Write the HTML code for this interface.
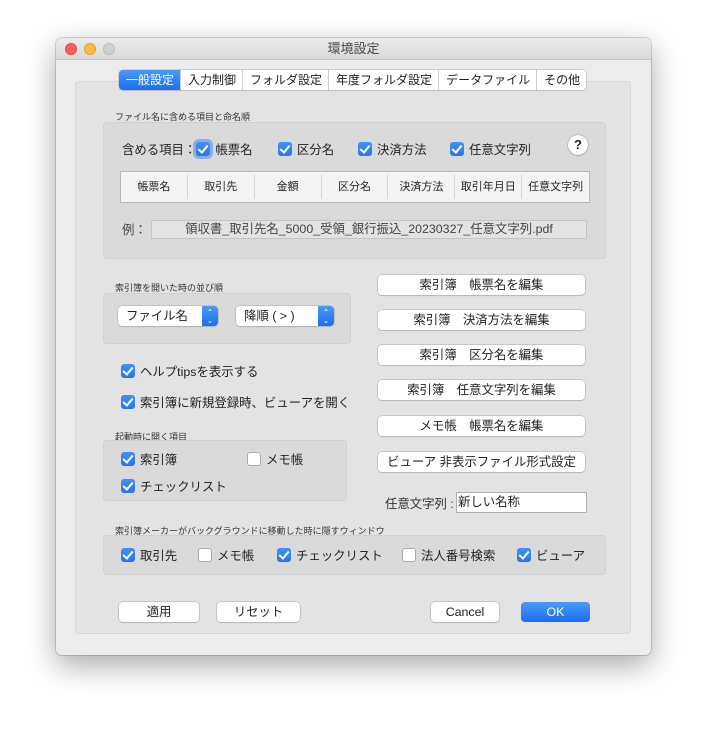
<!DOCTYPE html>
<html><head><meta charset="utf-8"><style>
*{box-sizing:border-box;margin:0;padding:0}
body{width:707px;height:729px;background:#fff;position:relative;overflow:hidden;font-family:"Liberation Sans","Noto Sans CJK JP",sans-serif;color:#222}
.win{position:absolute;left:56px;top:38px;width:595px;height:617px;background:#ececec;border-radius:6px;box-shadow:0 10px 30px rgba(0,0,0,.35),0 0 0 1px rgba(0,0,0,.15);overflow:hidden}
.tb{height:22px;background:linear-gradient(#ebebeb,#d9d9d9);border-bottom:1px solid #c4c4c4;text-align:center;font-size:13px;line-height:22px;color:#4a4a4a}
.dot{position:absolute;top:5px;width:12px;height:12px;border-radius:50%}
.a{position:absolute}
.pane{left:19px;top:43px;width:556px;height:553px;background:#e3e3e3;border:1px solid #d6d6d6;border-radius:4px}
.tabs{left:63px;top:32px;height:20px;display:flex;background:#fff;border-radius:4px;box-shadow:0 0 0 .5px #b0b0b0,0 1px 1px rgba(0,0,0,.15);font-size:12px;line-height:20px}
.tabs div{padding:0 6px 0 7px;border-right:1px solid #d0d0d0}
.tabs div:last-child{border:none}
.tabs .sel{background:linear-gradient(#4a9bf8,#1a6ef0);color:#fff;border-radius:4px 0 0 4px}
.box{background:#dadada;border:1px solid #d0d0d0;border-radius:4px}
.lbl{font-size:9px;color:#333}
.t{font-size:12.4px;white-space:nowrap}
.cb{display:inline-block;width:14px;height:14px;border-radius:3px;background:linear-gradient(#3f91f7,#2a74ee);vertical-align:-2px;position:relative;margin-right:5px}
.cb:after{content:"";position:absolute;left:4px;top:1px;width:4px;height:8px;border:solid #fff;border-width:0 2px 2px 0;transform:rotate(40deg)}
.cb.off{background:#fff;box-shadow:inset 0 0 0 1px #aaa}
.cb.off:after{display:none}
.btn{position:absolute;background:#fff;border-radius:4px;box-shadow:0 0 0 .5px #a8a8a8,0 1px 1px rgba(0,0,0,.15);font-size:12.4px;text-align:center;line-height:20px;height:20px}
.pop{position:absolute;height:20px;background:#fff;border-radius:4px;box-shadow:0 0 0 .5px #a8a8a8,0 1px 1px rgba(0,0,0,.15);font-size:12.4px;line-height:20px;padding-left:8px}
.pop i{position:absolute;right:0;top:0;width:16px;height:20px;background:linear-gradient(#4a9bf8,#1a6ef0);border-radius:0 4px 4px 0;color:#fff;font-style:normal;font-size:8px;line-height:8px;text-align:center;padding-top:3px}
.tbl{display:flex;background:#f4f4f4;border:1px solid #b8b8b8;font-size:11px;line-height:30px}
.tbl div{width:67px;text-align:center;border-right:1px solid #d4d4d4;height:24px;margin-top:3px;line-height:24px}
.tbl div:last-child{border:none}
</style></head><body>
<div class="win">
<div class="tb">環境設定</div>
<div class="dot" style="left:9px;background:#fc605c;border:.5px solid #de4a45"></div>
<div class="dot" style="left:28px;background:#fdbc40;border:.5px solid #dea033"></div>
<div class="dot" style="left:47px;background:#d0d0d0;border:.5px solid #bbb"></div>
<div class="a pane"></div>
<div class="a tabs"><div class="sel">一般設定</div><div>入力制御</div><div>フォルダ設定</div><div>年度フォルダ設定</div><div>データファイル</div><div>その他</div></div>

<div class="a lbl" style="left:59px;top:72px">ファイル名に含める項目と命名順</div>
<div class="a box" style="left:47px;top:84px;width:503px;height:137px"></div>
<div class="a t" style="left:66px;top:102px">含める項目：<span class="cb" style="box-shadow:0 0 0 3px rgba(60,130,240,.5)"></span>帳票名</div>
<div class="a t" style="left:222px;top:102px"><span class="cb"></span>区分名</div>
<div class="a t" style="left:302px;top:102px"><span class="cb"></span>決済方法</div>
<div class="a t" style="left:394px;top:102px"><span class="cb"></span>任意文字列</div>
<div class="a" style="left:512px;top:97px;width:20px;height:20px;border-radius:50%;background:#fff;box-shadow:0 0 0 .5px #999,0 1px 1px rgba(0,0,0,.2);text-align:center;font-size:13px;font-weight:bold;line-height:20px">?</div>
<div class="a tbl" style="left:64px;top:133px;width:470px;height:32px"><div>帳票名</div><div>取引先</div><div>金額</div><div>区分名</div><div>決済方法</div><div>取引年月日</div><div>任意文字列</div></div>
<div class="a t" style="left:66px;top:182px;color:#444">例：</div>
<div class="a" style="left:95px;top:182px;width:436px;height:19px;background:#e3e3e3;border:1px solid #c4c4c4;font-size:12.4px;text-align:center;line-height:17px;color:#444">領収書_取引先名_5000_受領_銀行振込_20230327_任意文字列.pdf</div>

<div class="a lbl" style="left:59px;top:243px">索引簿を開いた時の並び順</div>
<div class="a box" style="left:47px;top:255px;width:248px;height:51px"></div>
<div class="pop" style="left:62px;top:268px;width:100px">ファイル名<i>⌃<br>⌄</i></div>
<div class="pop" style="left:180px;top:268px;width:98px">降順 ( &gt; )<i>⌃<br>⌄</i></div>
<div class="a t" style="left:65px;top:324px"><span class="cb"></span>ヘルプtipsを表示する</div>
<div class="a t" style="left:65px;top:355px"><span class="cb"></span>索引簿に新規登録時、ビューアを開く</div>
<div class="a lbl" style="left:59px;top:392px">起動時に開く項目</div>
<div class="a box" style="left:47px;top:402px;width:244px;height:61px"></div>
<div class="a t" style="left:65px;top:412px"><span class="cb"></span>索引簿</div>
<div class="a t" style="left:191px;top:412px"><span class="cb off"></span>メモ帳</div>
<div class="a t" style="left:65px;top:439px"><span class="cb"></span>チェックリスト</div>

<div class="btn" style="left:322px;top:237px;width:207px">索引簿　帳票名を編集</div>
<div class="btn" style="left:322px;top:272px;width:207px">索引簿　決済方法を編集</div>
<div class="btn" style="left:322px;top:307px;width:207px">索引簿　区分名を編集</div>
<div class="btn" style="left:322px;top:342px;width:207px">索引簿　任意文字列を編集</div>
<div class="btn" style="left:322px;top:378px;width:207px">メモ帳　帳票名を編集</div>
<div class="btn" style="left:322px;top:414px;width:207px">ビューア 非表示ファイル形式設定</div>
<div class="a t" style="left:329px;top:456px;color:#333">任意文字列 :</div>
<div class="a" style="left:400px;top:454px;width:131px;height:21px;background:#fff;border:1px solid #b0b0b0;font-size:12.4px;line-height:19px;padding-left:1px">新しい名称</div>

<div class="a lbl" style="left:59px;top:486px">索引簿メーカーがバックグラウンドに移動した時に隠すウィンドウ</div>
<div class="a box" style="left:47px;top:497px;width:503px;height:40px"></div>
<div class="a t" style="left:65px;top:508px"><span class="cb"></span>取引先</div>
<div class="a t" style="left:142px;top:508px"><span class="cb off"></span>メモ帳</div>
<div class="a t" style="left:221px;top:508px"><span class="cb"></span>チェックリスト</div>
<div class="a t" style="left:346px;top:508px"><span class="cb off"></span>法人番号検索</div>
<div class="a t" style="left:461px;top:508px"><span class="cb"></span>ビューア</div>

<div class="btn" style="left:63px;top:564px;width:80px">適用</div>
<div class="btn" style="left:161px;top:564px;width:83px">リセット</div>
<div class="btn" style="left:375px;top:564px;width:68px">Cancel</div>
<div class="btn" style="left:465px;top:564px;width:69px;background:linear-gradient(#4a9bf8,#1a6ef0);color:#fff;box-shadow:none">OK</div>
</div>
</body></html>
